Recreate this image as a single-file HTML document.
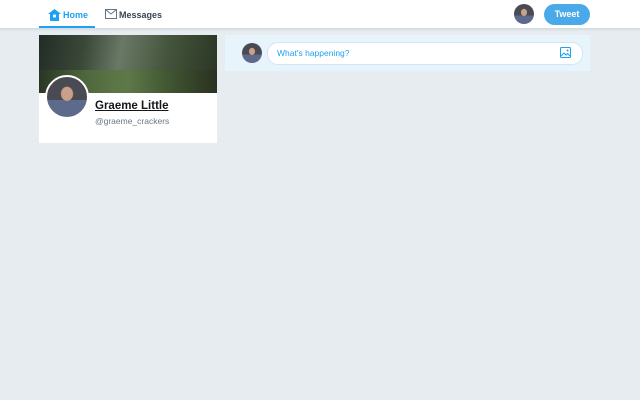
<!DOCTYPE html><html><head><style>
body{margin:0;width:640px;height:400px;background:#e6ecf0;font-family:"Liberation Sans",sans-serif;position:relative;overflow:hidden}
.a{position:absolute}
.av{border-radius:50%;background:radial-gradient(ellipse at 50% 42%,#caa08a 0 20%,transparent 23%),linear-gradient(#4a4a52 0 58%,#5d6a8c 58%);}
</style></head><body>
<div class="a" style="left:0;top:0;width:640px;height:28px;background:#fff;border-bottom:1px solid #d6dde3;box-shadow:0 1px 2px rgba(0,0,0,.08)"></div>
<div class="a" style="left:39px;top:26px;width:56px;height:2px;background:#1da1f2"></div>
<svg class="a" style="left:48px;top:9px" width="13" height="12" viewBox="0 0 13 12"><path d="M6.5 0L0 5h2v7h9V5h2z" fill="#1da1f2"/><circle cx="6.5" cy="7" r="1.6" fill="#fff"/></svg>
<div class="a" style="left:63px;top:10px;font-size:9px;font-weight:bold;color:#1da1f2">Home</div>
<svg class="a" style="left:105px;top:9px" width="12" height="10" viewBox="0 0 12 10"><rect x=".5" y=".5" width="11" height="9" fill="none" stroke="#657786"/><path d="M.5 .5L6 5l5.5-4.5" fill="none" stroke="#657786"/></svg>
<div class="a" style="left:119px;top:10px;font-size:9px;font-weight:bold;color:#3a444f">Messages</div>
<div class="a av" style="left:514px;top:4px;width:20px;height:20px"></div>
<div class="a" style="left:544px;top:4px;width:46px;height:21px;border-radius:11px;background:#4aa9e9;color:#fff;font-size:9px;font-weight:bold;text-align:center;line-height:21px">Tweet</div>
<div class="a" style="left:39px;top:35px;width:178px;height:108px;background:#fff"></div>
<div class="a" style="left:39px;top:35px;width:178px;height:58px;background:linear-gradient(100deg,#222c26 0%,#3a4838 25%,#6a7866 45%,#44553c 70%,#2a3424 100%)"></div>
<div class="a" style="left:39px;top:70px;width:178px;height:23px;background:linear-gradient(90deg,#2a3624,#4f6a3a,#5d7a44,#3e5430,#2a3020);opacity:.85"></div>
<div class="a av" style="left:45px;top:75px;width:40px;height:40px;border:2px solid #fff"></div>
<div class="a" style="left:95px;top:100px;font-size:11.5px;font-weight:bold;color:#14171a;text-decoration:underline">Graeme Little</div>
<div class="a" style="left:95px;top:116px;font-size:8.5px;color:#657786">@graeme_crackers</div>
<div class="a" style="left:225px;top:35px;width:365px;height:36px;background:#e8f4fb"></div>
<div class="a av" style="left:242px;top:43px;width:20px;height:20px"></div>
<div class="a" style="left:267px;top:42px;width:314px;height:21px;background:#fff;border:1px solid #d0e6f5;border-radius:11px"></div>
<div class="a" style="left:277px;top:48px;font-size:8.5px;color:#1da1f2">What's happening?</div>
<svg class="a" style="left:560px;top:47px" width="11" height="11" viewBox="0 0 11 11"><rect x=".5" y=".5" width="10" height="10" rx="1" fill="none" stroke="#1da1f2"/><path d="M1 9l3-3 2 2 1.5-1.5L10 9" fill="none" stroke="#1da1f2"/><circle cx="7.5" cy="3.5" r="1" fill="#1da1f2"/></svg>
</body></html>
